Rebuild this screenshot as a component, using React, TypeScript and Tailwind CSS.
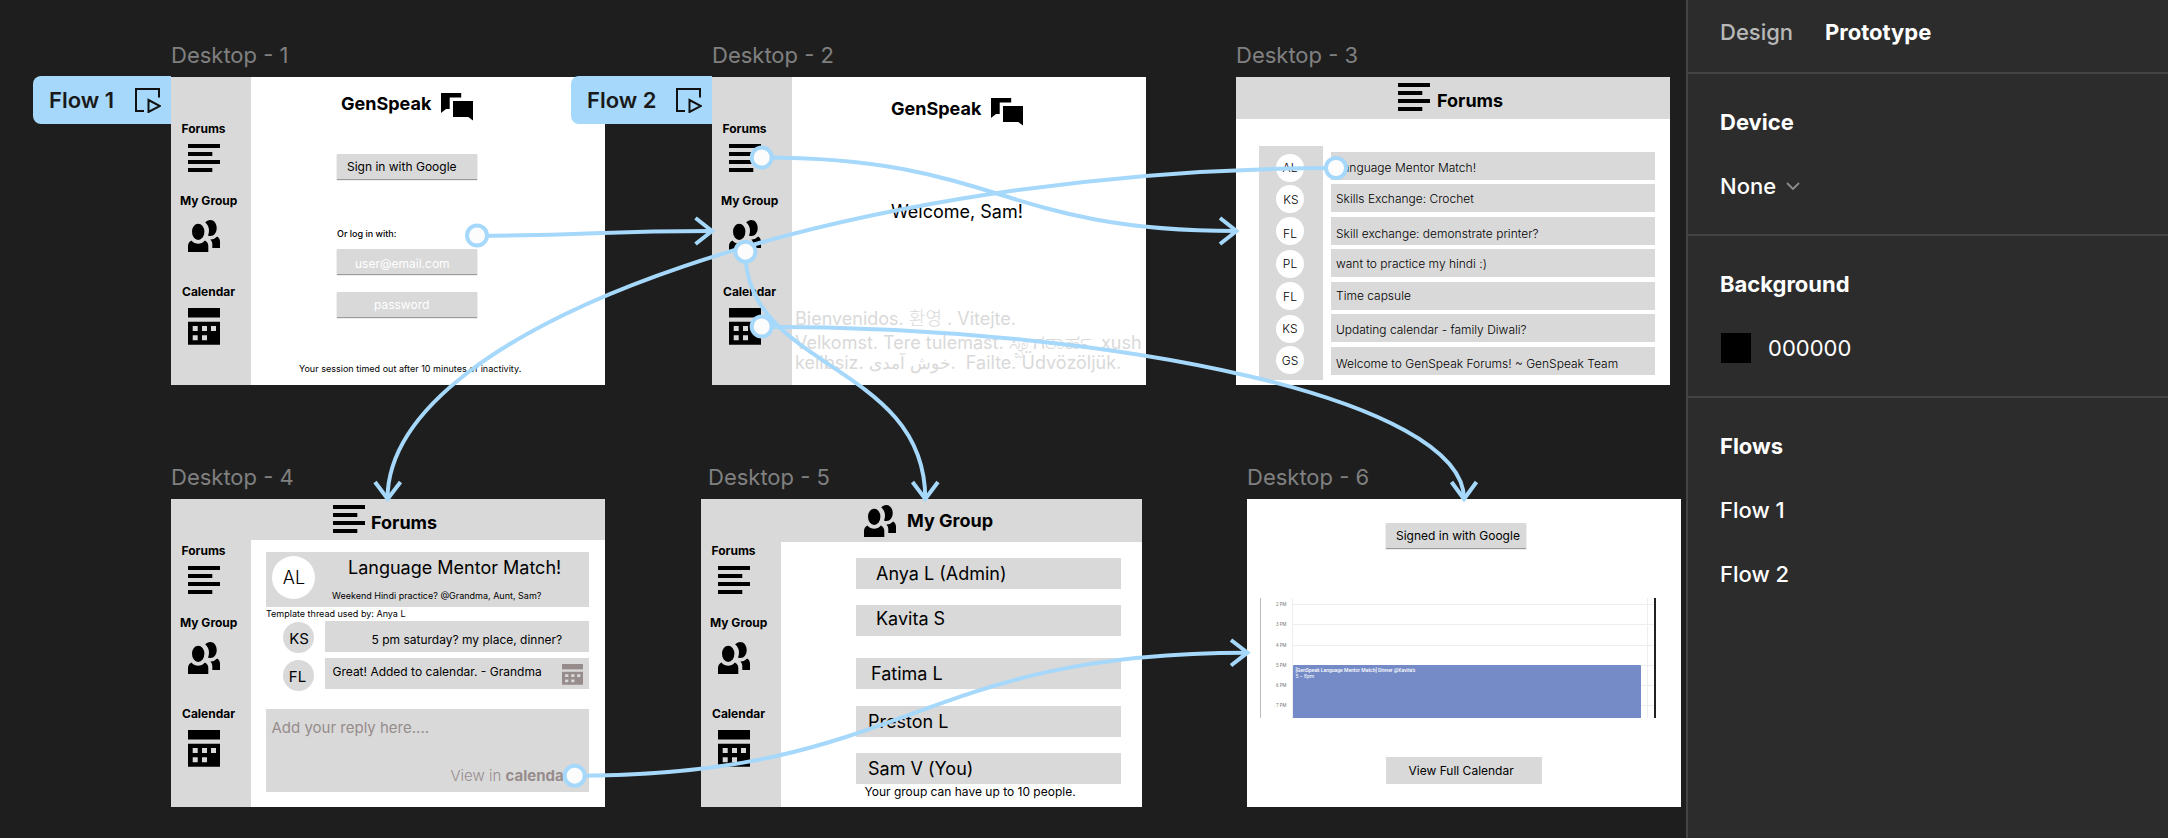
import React from "react";

function LinesIcon({ className }: { className: string }) {
  return (
    <svg viewBox="0 0 32 29" className={className} fill="currentColor">
      <rect x="0" y="0" width="32" height="4" />
      <rect x="0" y="8" width="24.3" height="4" />
      <rect x="0" y="16" width="32" height="4" />
      <rect x="0" y="24" width="24.3" height="4" />
    </svg>
  );
}

function PeopleIcon({ className }: { className: string }) {
  return (
    <svg viewBox="0 0 32 32" className={className} fill="currentColor">
      <ellipse cx="10.2" cy="11.8" rx="6.2" ry="8.1" />
      <path d="M0 32V26Q0 22 3.5 20.5C5 22.8 8 23.7 10.2 23.7C12.5 23.7 15.2 22.8 16.8 20.5Q20.3 22 20.3 26V32Z" />
      <path d="M17.2 2.6C18.4 .9 20.3 0 22.3 0C26 0 28.7 3.5 28.7 8C28.7 12.5 26 16 22.5 16C21.5 16 20.7 15.8 20 15.4C20.7 13.6 21 12 21 10.4C21 7.2 19.6 4.4 17.2 2.6Z" />
      <path d="M24.3 28V24Q24.3 21 22.3 19.4Q26.5 19.6 29.2 16.6Q32 18.2 32 22V28Z" />
    </svg>
  );
}

function CalendarIcon({ className }: { className: string }) {
  return (
    <svg viewBox="0 0 32 37" className={className} fill="currentColor" preserveAspectRatio="none">
      <rect x="0" y="0" width="32" height="9.5" />
      <path
        fillRule="evenodd"
        d="M0 13.7H32V36.7H0ZM4.7 18v5h5v-5ZM14 18v5h5v-5ZM23 18v5h5v-5ZM4.7 27.3v5h5v-5ZM14 27.3v5h5v-5Z"
      />
    </svg>
  );
}

function ChatIcon({ className }: { className: string }) {
  return (
    <svg viewBox="0 0 32 28" className={className} fill="currentColor">
      <path d="M0 0H20.2V4.5H8.7V16H5L0 20Z" />
      <path d="M12 8H32V27.5L27.3 24H12Z" />
    </svg>
  );
}

function Sidebar() {
  return (
    <div className="flex h-full w-20 shrink-0 flex-col bg-[#d9d9d9] pt-11 text-[12px] leading-4 font-bold">
      <span className="pl-[10.5px]">Forums</span>
      <LinesIcon className="mt-[7px] ml-[17px] h-[29px] w-8 shrink-0" />
      <span className="mt-5 pl-[9px]">My Group</span>
      <PeopleIcon className="mt-[11px] ml-[17px] h-8 w-8 shrink-0" />
      <span className="mt-8 pl-[11px]">Calendar</span>
      <CalendarIcon className="mt-2 ml-[17px] h-[37px] w-8 shrink-0" />
    </div>
  );
}

function Title({ className, children }: { className: string; children: React.ReactNode }) {
  return <div className={`absolute text-[22px] leading-6 whitespace-nowrap text-[#808080] ${className}`}>{children}</div>;
}

function Frame({ className, children }: { className: string; children: React.ReactNode }) {
  return (
    <div className={`absolute flex h-[308px] overflow-hidden bg-white whitespace-nowrap text-black ${className}`}>
      {children}
    </div>
  );
}

function FlowTag({ className, children }: { className: string; children: React.ReactNode }) {
  return (
    <div
      className={`absolute top-[76px] flex h-12 items-center justify-between rounded-l-[8px] bg-[#a5d8fa] pr-[10px] pl-4 text-[22px] font-semibold whitespace-nowrap text-[#1a1a1a] ${className}`}
    >
      <span>{children}</span>
      <svg viewBox="0 0 26 26" className="h-[26px] w-[26px]" fill="none" stroke="#111" strokeWidth="2">
        <path d="M9 24H1V2H24V10.5" />
        <path d="M13.5 13V25L25 19Z" />
      </svg>
    </div>
  );
}

const posts = [
  { text: "Language Mentor Match!", row: "h-7 pt-2", gap: "mt-0" },
  { text: "Skills Exchange: Crochet", row: "h-7 pt-[7px]", gap: "mt-1" },
  { text: "Skill exchange: demonstrate printer?", row: "h-7 pt-[9px]", gap: "mt-[5px]" },
  { text: "want to practice my hindi :)", row: "h-7 pt-[7px]", gap: "mt-1" },
  { text: "Time capsule", row: "h-7 pt-[6px]", gap: "mt-[5px]" },
  { text: "Updating calendar - family Diwali?", row: "h-7 pt-[8px]", gap: "mt-1" },
  { text: "Welcome to GenSpeak Forums! ~ GenSpeak Team", row: "h-7 pt-[9px]", gap: "mt-[5px]" },
];

const authors = [
  { name: "AL", cls: "mt-0 pt-0" },
  { name: "KS", cls: "mt-[3px] pt-[2px] pl-[2px]" },
  { name: "FL", cls: "mt-[4px] pt-[6px]" },
  { name: "PL", cls: "mt-[5px] pt-0" },
  { name: "FL", cls: "mt-[4px] pt-[1px]" },
  { name: "KS", cls: "mt-[5px] pt-0" },
  { name: "GS", cls: "mt-[3px] pt-[1px]" },
];

const members = [
  { name: "Anya L (Admin)", cls: "mt-4 pl-[20px]" },
  { name: "Kavita S", cls: "mt-4 pl-[20px] pb-1" },
  { name: "Fatima L", cls: "mt-[22px] pl-[15px]" },
  { name: "Preston L", cls: "mt-[17px] pl-3" },
  { name: "Sam V (You)", cls: "mt-4 pl-[12px]" },
];

const hours = ["2 PM", "3 PM", "4 PM", "5 PM", "6 PM", "7 PM"];

const links = [
  "M477 235.7C594 235.7 595 231 712 231",
  "M761.7 157.5C999 157.5 999 231 1236 231",
  "M1336 168C861 168 387.5 320 387.5 499",
  "M745.4 252C745.4 370 925.3 363 925.3 499",
  "M761.7 326.7C1120 326.7 1464 400 1464 499",
  "M574.7 775.7C911 775.7 911 652.7 1247 652.7",
];

const heads = [
  "M695.5 218L712 231L695.5 244",
  "M1220 218L1236.5 231L1220 244",
  "M375 482L387.7 499L400.5 482",
  "M912.5 482L925.3 499L938 482",
  "M1451.5 482L1464 499L1476.5 482",
  "M1231 640L1247.5 652.7L1231 665.5",
];

const handles = [
  [477, 235.5],
  [761.7, 157.5],
  [745.4, 251.7],
  [761.7, 326.5],
  [1336, 168],
  [574.7, 775.7],
];

function Canvas() {
  return (
    <main className="relative h-full w-[1686px] shrink-0 overflow-hidden">
      <Title className="top-[43px] left-[171px]">Desktop - 1</Title>
      <Title className="top-[43px] left-[712px]">Desktop - 2</Title>
      <Title className="top-[43px] left-[1236px]">Desktop - 3</Title>
      <Title className="top-[465px] left-[171px]">Desktop - 4</Title>
      <Title className="top-[465px] left-[708px]">Desktop - 5</Title>
      <Title className="top-[465px] left-[1247px]">Desktop - 6</Title>

      <Frame className="top-[77px] left-[171px] w-[434px]">
        <Sidebar />
        <div className="flex flex-col text-[12px] leading-4">
          <div className="flex h-[77px] items-start pl-[90px]">
            <span className="mt-[17px] w-[100px] text-[18px] leading-5 font-bold">GenSpeak</span>
            <ChatIcon className="mt-4 h-7 w-8" />
          </div>
          <div className="ml-[86px] h-[25px] w-[140px] bg-[#d9d9d9] pt-[5px] pl-[10px] shadow-[0_1px_1px_#999]">
            Sign in with Google
          </div>
          <span className="mt-[49px] ml-[86px] text-[9px] leading-3 font-medium">Or log in with:</span>
          <div className="mt-[9px] ml-[86px] h-[25px] w-[140px] bg-[#d9d9d9] pt-[7px] pl-[18px] text-white shadow-[0_1px_1px_#999]">
            user@email.com
          </div>
          <div className="mt-[18px] ml-[86px] h-[25px] w-[140px] bg-[#d9d9d9] pt-[5px] pl-[37px] text-white shadow-[0_1px_1px_#999]">
            password
          </div>
          <span className="mt-[46px] ml-[48px] text-[9px] leading-3 tracking-[0.02px]">
            Your session timed out after 10 minutes of inactivity.
          </span>
        </div>
      </Frame>

      <Frame className="top-[77px] left-[712px] w-[434px]">
        <Sidebar />
        <div className="flex flex-col text-[18px] leading-5">
          <div className="flex h-[125px] items-start pl-[99px]">
            <span className="mt-[22px] w-[100px] font-bold">GenSpeak</span>
            <ChatIcon className="mt-[21px] h-7 w-8" />
          </div>
          <span className="pl-[99px]">Welcome, Sam!</span>
          <div className="mt-[86px] pl-[3px] text-[18px] leading-[22px] whitespace-pre text-[#d9d9d9]">
            <div className="h-[22px]">
              Bienvenidos. <span className="font-light">환영</span> . Vitejte.
            </div>
            <div className="h-[22px]">
              Velkomst. Tere tulemast. <span className="text-[22px] leading-none">ಸ್ವಾಗತಾರ್ಹ</span>. xush
            </div>
            <div className="h-[22px]">
              kelibsiz. <span className="text-[17px] leading-none">خوش آمدی</span>.{"  "}Failte. Üdvözöljük.
            </div>
          </div>
        </div>
      </Frame>

      <Frame className="top-[77px] left-[1236px] w-[434px] flex-col">
        <div className="flex h-[42px] shrink-0 items-start bg-[#d9d9d9] pl-[162px]">
          <LinesIcon className="mt-[6px] h-[29px] w-8" />
          <span className="mt-[14px] ml-[7px] text-[18px] leading-5 font-bold">Forums</span>
        </div>
        <div className="flex pt-[27px] pl-[23px] text-[12px] leading-4 font-light">
          <div className="flex h-[234px] w-[64px] flex-col items-center bg-[#d9d9d9] pt-2 pr-[2px]">
            {authors.map((a, i) => (
              <div
                key={i}
                className={`flex h-7 w-7 shrink-0 items-center justify-center rounded-full bg-white ${a.cls}`}
              >
                {a.name}
              </div>
            ))}
          </div>
          <div className="flex w-[332px] flex-col pt-[6px] pl-2">
            {posts.map((p) => (
              <div key={p.text} className={`bg-[#d9d9d9] pl-[5px] ${p.row} ${p.gap}`}>
                {p.text}
              </div>
            ))}
          </div>
        </div>
      </Frame>

      <Frame className="top-[499px] left-[171px] w-[434px]">
        <Sidebar />
        <div className="flex w-[354px] flex-col text-[12px] leading-4">
          <div className="flex h-[41px] shrink-0 items-start bg-[#d9d9d9] pl-[82px]">
            <LinesIcon className="mt-[6px] h-[29px] w-8" />
            <span className="mt-[14px] ml-[6px] text-[18px] leading-5 font-bold">Forums</span>
          </div>
          <div className="mt-3 ml-[15px] flex h-[55px] w-[323px] shrink-0 bg-[#d9d9d9] pl-[6px]">
            <div className="mt-1 flex h-[43px] w-[43px] items-center justify-center rounded-full bg-white pl-px text-[18px] font-light">
              AL
            </div>
            <div className="flex flex-col pl-[16px]">
              <span className="mt-[6px] pl-[17px] text-[18px] leading-5">Language Mentor Match!</span>
              <span className="mt-[12px] pl-[1px] text-[9px] leading-3">Weekend Hindi practice? @Grandma, Aunt, Sam?</span>
            </div>
          </div>
          <span className="ml-[15px] h-[14px] text-[9px] leading-[13px]">Template thread used by: Anya L</span>
          <div className="flex h-[31px] pl-8">
            <div className="mt-px flex h-[31px] w-[31px] items-center justify-center rounded-full bg-[#d9d9d9] pt-[3px] pl-px text-[15px]">
              KS
            </div>
            <div className="ml-[11px] w-[264px] bg-[#d9d9d9] pt-[11px] pl-[46.5px]">5 pm saturday? my place, dinner?</div>
          </div>
          <div className="mt-[6px] flex h-[31px] pl-8">
            <div className="mt-[2px] flex h-[31px] w-[31px] items-center justify-center rounded-full bg-[#d9d9d9] pt-[2px] pr-[2px] text-[15px]">
              FL
            </div>
            <div className="ml-[11px] flex w-[264px] bg-[#d9d9d9] pl-[7.5px]">
              <span className="w-[229.5px] pt-[6px]">Great! Added to calendar. - Grandma</span>
              <CalendarIcon className="mt-[6px] h-[21px] w-[21px] text-[#968c8c]" />
            </div>
          </div>
          <div className="mt-5 ml-[15px] flex h-[83px] w-[323px] shrink-0 flex-col bg-[#d9d9d9] pl-[5.5px] text-[15px] leading-5 text-[#968c8c]">
            <span className="mt-[9px]">Add your reply here....</span>
            <span className="mt-7 pl-[179px] font-light">
              View in <b className="font-bold">calendar</b>
            </span>
          </div>
        </div>
      </Frame>

      <Frame className="top-[499px] left-[701px] w-[441px]">
        <Sidebar />
        <div className="flex w-[361px] flex-col">
          <div className="flex h-[43px] shrink-0 items-start bg-[#d9d9d9] pl-[83px]">
            <PeopleIcon className="mt-[6px] h-8 w-8" />
            <span className="mt-[12px] ml-[11px] text-[18px] leading-5 font-bold">My Group</span>
          </div>
          <div className="flex flex-col pl-[75px] text-[18px]">
            {members.map((m) => (
              <div key={m.name} className={`flex h-[31px] w-[265px] items-center bg-[#d9d9d9] ${m.cls}`}>
                {m.name}
              </div>
            ))}
            <span className="pl-[8.5px] text-[12px] leading-4">Your group can have up to 10 people.</span>
          </div>
        </div>
      </Frame>

      <Frame className="top-[499px] left-[1247px] w-[434px] flex-col text-[12px] leading-4">
        <div className="mt-6 ml-[139px] h-[25px] w-[140px] shrink-0 bg-[#d9d9d9] pt-[5px] pl-[10px] shadow-[0_1px_1px_#999]">
          Signed in with Google
        </div>
        <div className="mt-[50px] ml-[13px] flex h-[120px] w-[396px] shrink-0 overflow-hidden border-r-2 border-l border-r-[#222] border-l-[#bbb]">
          <div className="flex w-[31px] flex-col font-[Roboto] text-[4.5px] text-[#777]">
            {hours.map((h) => (
              <span key={h} className="flex h-[20.25px] shrink-0 items-start pl-[15px] leading-[13px]">
                {h}
              </span>
            ))}
          </div>
          <div className="flex flex-1 border-l border-[#eee] bg-[repeating-linear-gradient(to_bottom,transparent_0,transparent_6px,#eee_6px,#eee_7px,transparent_7px,transparent_20.25px)] pt-[67px]">
            <div className="flex h-full w-[348px] flex-col rounded-t-[1px] bg-[#748bc7] pt-[2px] pl-[2.5px] font-[Roboto] text-[5px] leading-[6px] font-medium text-white">
              <span>[GenSpeak Language Mentor Match] Dinner @Kavita's</span>
              <span className="font-normal">5 – 8pm</span>
            </div>
            <div className="-mt-[67px] ml-[6px] h-[120px] w-px bg-[#eee]" />
          </div>
        </div>
        <div className="mt-[39px] ml-[139px] h-[27px] w-[156px] shrink-0 bg-[#d9d9d9] pt-[6px] pl-[22.5px]">
          View Full Calendar
        </div>
      </Frame>

      <FlowTag className="left-[33px] w-[138px]">Flow 1</FlowTag>
      <FlowTag className="left-[571px] w-[141px]">Flow 2</FlowTag>

      <svg className="absolute inset-0 h-full w-full" viewBox="0 0 1686 838" fill="none" stroke="#a5d8fa" strokeWidth="4">
        {links.map((d) => (
          <path key={d} d={d} />
        ))}
        {heads.map((d) => (
          <path key={d} d={d} />
        ))}
        {handles.map(([x, y]) => (
          <circle key={`${x}-${y}`} cx={x} cy={y} r="10" fill="#fcfcfc" />
        ))}
      </svg>
    </main>
  );
}

function Panel() {
  return (
    <aside className="flex h-full flex-1 flex-col border-l-2 border-[#444] bg-[#2c2c2c] text-[22px] leading-6 text-white">
      <div className="flex h-[74px] gap-8 border-b-2 border-[#444] pt-5 pl-8">
        <span className="font-medium text-[#b8b8b8]">Design</span>
        <span className="font-[650]">Prototype</span>
      </div>
      <div className="flex h-[162px] flex-col gap-10 border-b-2 border-[#444] pt-9 pl-8">
        <span className="font-[650]">Device</span>
        <span className="flex items-center gap-[10px] font-medium">
          None
          <svg viewBox="0 0 14 8" className="h-2 w-[14px]" fill="none" stroke="#8c8c8c" strokeWidth="1.8">
            <path d="M1 1L7 7L13 1" />
          </svg>
        </span>
      </div>
      <div className="flex h-[162px] flex-col border-b-2 border-[#444] pt-9 pl-8">
        <span className="font-[650]">Background</span>
        <span className="mt-[37px] flex items-center gap-[17px]">
          <span className="ml-px h-[30px] w-[30px] bg-black" />
          000000
        </span>
      </div>
      <div className="flex flex-col gap-10 pt-9 pl-8">
        <span className="font-[650]">Flows</span>
        <span className="font-medium">Flow 1</span>
        <span className="font-medium">Flow 2</span>
      </div>
    </aside>
  );
}

export default function App() {
  return (
    <div className="flex h-[838px] w-[2168px] overflow-hidden bg-[#1e1e1e] font-[Inter,'Noto_Sans_CJK_KR','Noto_Sans',sans-serif]">
      <Canvas />
      <Panel />
    </div>
  );
}
